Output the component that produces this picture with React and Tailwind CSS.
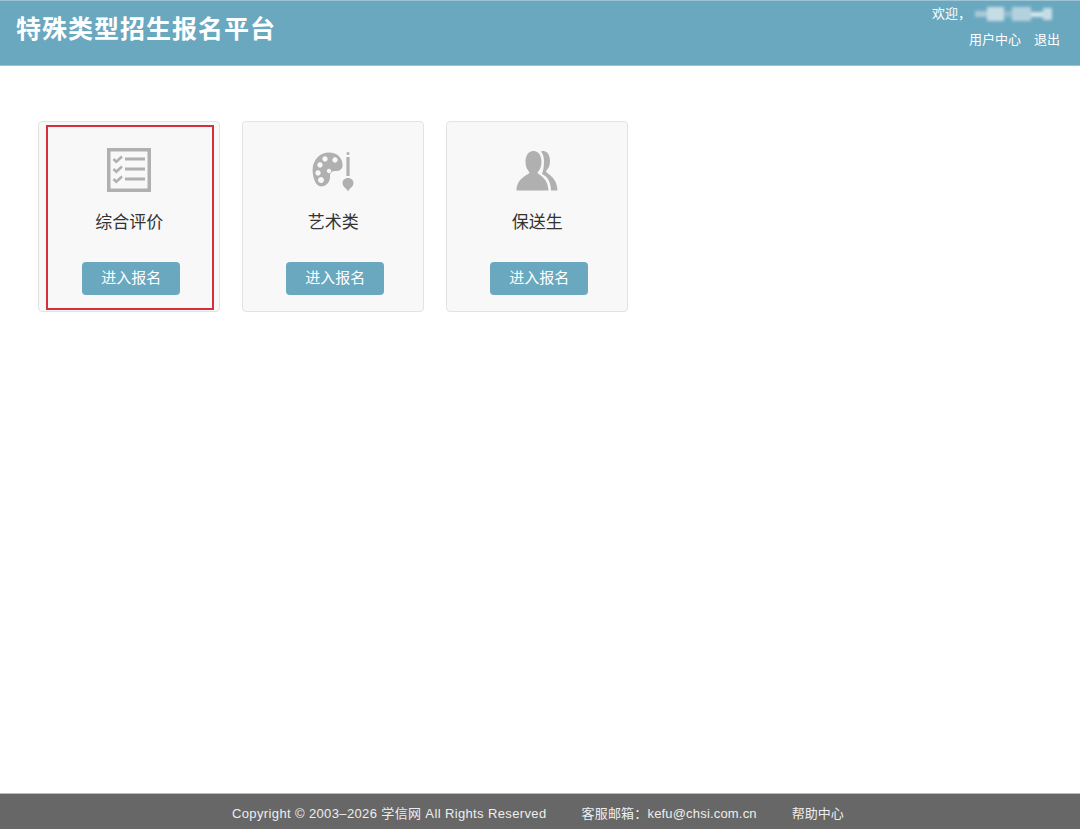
const font = { fontFamily: '"Liberation Sans", "Noto Sans CJK SC", sans-serif' };

const ChecklistIcon = () => (
  <svg width="44" height="44" viewBox="0 0 44 44" fill="none" stroke="#b0b0b0">
    <rect x="1.750" y="1.750" width="40.500" height="40.500" strokeWidth="3.500" />
    <path d="M6.500 11l2.800 2.800L15 8.500M6.500 21l2.800 2.800L15 18.500M6.500 31l2.800 2.800L15 28.500" strokeWidth="2.600" />
    <path d="M18 11h20M18 21h20M18 31h20" strokeWidth="2.800" />
  </svg>
);

const PaletteIcon = () => (
  <svg width="42" height="40" viewBox="0 0 42 40" fill="#b0b0b0">
    <path
      fillRule="evenodd"
      d="M17 .6C25 .6 30.600 6 30.600 13C30.600 17 28 19 24 19C20 19 18 20 18 24C18.500 30 14 34.500 9 34.500C4 34.500 .6 26 .6 18C.6 8 8 .6 17 .6ZM8 10.300a2.700 2.700 0 1 0 .01 0ZM13 4.300a2.700 2.700 0 1 0 .01 0ZM23 5.300a2.700 2.700 0 1 0 .01 0ZM6 18.300a2.700 2.700 0 1 0 .01 0ZM17 16.800a2.200 2.200 0 1 0 .01 0ZM9 25a3 3 0 1 0 .01 0Z"
    />
    <rect x="34.500" y="0" width="3" height="3" rx="1.500" />
    <rect x="34.400" y="5" width="3.200" height="19" />
    <path d="M36 26C39.500 26 41.500 28.500 41.500 31C41.500 35 37.500 36 36 39.500C34.500 36 30.500 35 30.500 31C30.500 28.500 32.500 26 36 26Z" />
  </svg>
);

const PeopleIcon = () => (
  <svg width="42" height="42" viewBox="0 0 42 42" fill="#b0b0b0">
    <path d="M25 1.500C30 -.5 34 4 34 11C34 16 32 19 30 21C30 24 41 26 41.500 40.500L35 40.500C35 32 31 26 26 24C27.500 20 28 16 28 11C28 7 27 4 25 1.500Z" />
    <path d="M17.500 1C23 1 25.500 6 25.500 12C25.500 17 23.500 20 21.500 22.500C22 25 32 27 32.500 40.500L.5 40.500C1 27 13 25 13.500 22.500C11.500 20 9.500 17 9.500 12C9.500 6 12 1 17.500 1Z" />
  </svg>
);

const cards = [
  { title: "综合评价", icon: <ChecklistIcon />, iconPad: "pt-[26px]", marked: true },
  { title: "艺术类", icon: <PaletteIcon />, iconPad: "pt-[30px]" },
  { title: "保送生", icon: <PeopleIcon />, iconPad: "pt-[28px]" },
];

const Card = ({ title, icon, iconPad, marked }) => (
  <div className="relative flex h-[191px] w-[182.400px] flex-col items-center rounded-[4px] border border-[#e3e3e3] bg-[#f8f8f8]">
    <div className={`h-[89px] shrink-0 ${iconPad}`}>{icon}</div>
    <h3 className="text-[17px] leading-6 text-[#333]">{title}</h3>
    <button className="ml-[4px] mt-[27px] h-[33px] w-[98px] shrink-0 rounded-[4px] bg-[#6aa8c0] text-[15px] text-white">
      进入报名
    </button>
    {marked && (
      <div className="absolute left-[7px] top-[3px] h-[185px] w-[168px] border-2 border-[#d62f3a]" />
    )}
  </div>
);

export default function App() {
  return (
    <div className="flex h-[830px] flex-col bg-white" style={font}>
      <header className="flex h-[66px] items-start justify-between border-y border-[#9cc4d4] bg-[#6aa8c0] text-white">
        <h1 className="pl-[16px] pt-[10px] text-[25px] font-bold leading-9 tracking-[1px]">特殊类型招生报名平台</h1>
        <div className="pr-[20px] pt-[3px] text-[13px] leading-5">
          <div className="flex items-center">
            <span>欢迎，</span>
            <span className="ml-[4px] mr-[8px] flex h-[14px] w-[77px] items-center blur-[1.500px]">
              <i className="h-[6px] w-[12px] bg-[#a9cad8]" />
              <i className="h-[14px] w-[17px] bg-[#c6dde6]" />
              <i className="h-[6px] w-[8px] bg-[#8fbccd]" />
              <i className="h-[14px] w-[19px] bg-[#b4d2de]" />
              <i className="h-[5px] w-[12px] bg-[#d5e6ec]" />
              <i className="h-[12px] w-[9px] bg-[#c6dde6]" />
            </span>
          </div>
          <div className="mt-[6px] flex justify-end gap-[13px]">
            <span>用户中心</span>
            <span>退出</span>
          </div>
        </div>
      </header>
      <main className="flex flex-1 items-start gap-[21.600px] pl-[38px] pt-[55px]">
        {cards.map((card) => (
          <Card key={card.title} {...card} />
        ))}
      </main>
      <footer className="mb-px flex h-[36px] items-center gap-[35px] border-t border-[#bbb] bg-[#676767] pl-[232px] pt-[5px] text-[13px] text-[#eee]">
        <span className="tracking-[0.37px]">Copyright © 2003–2026 学信网 All Rights Reserved</span>
        <span className="tracking-[0.18px]">客服邮箱：kefu@chsi.com.cn</span>
        <span>帮助中心</span>
      </footer>
    </div>
  );
}
